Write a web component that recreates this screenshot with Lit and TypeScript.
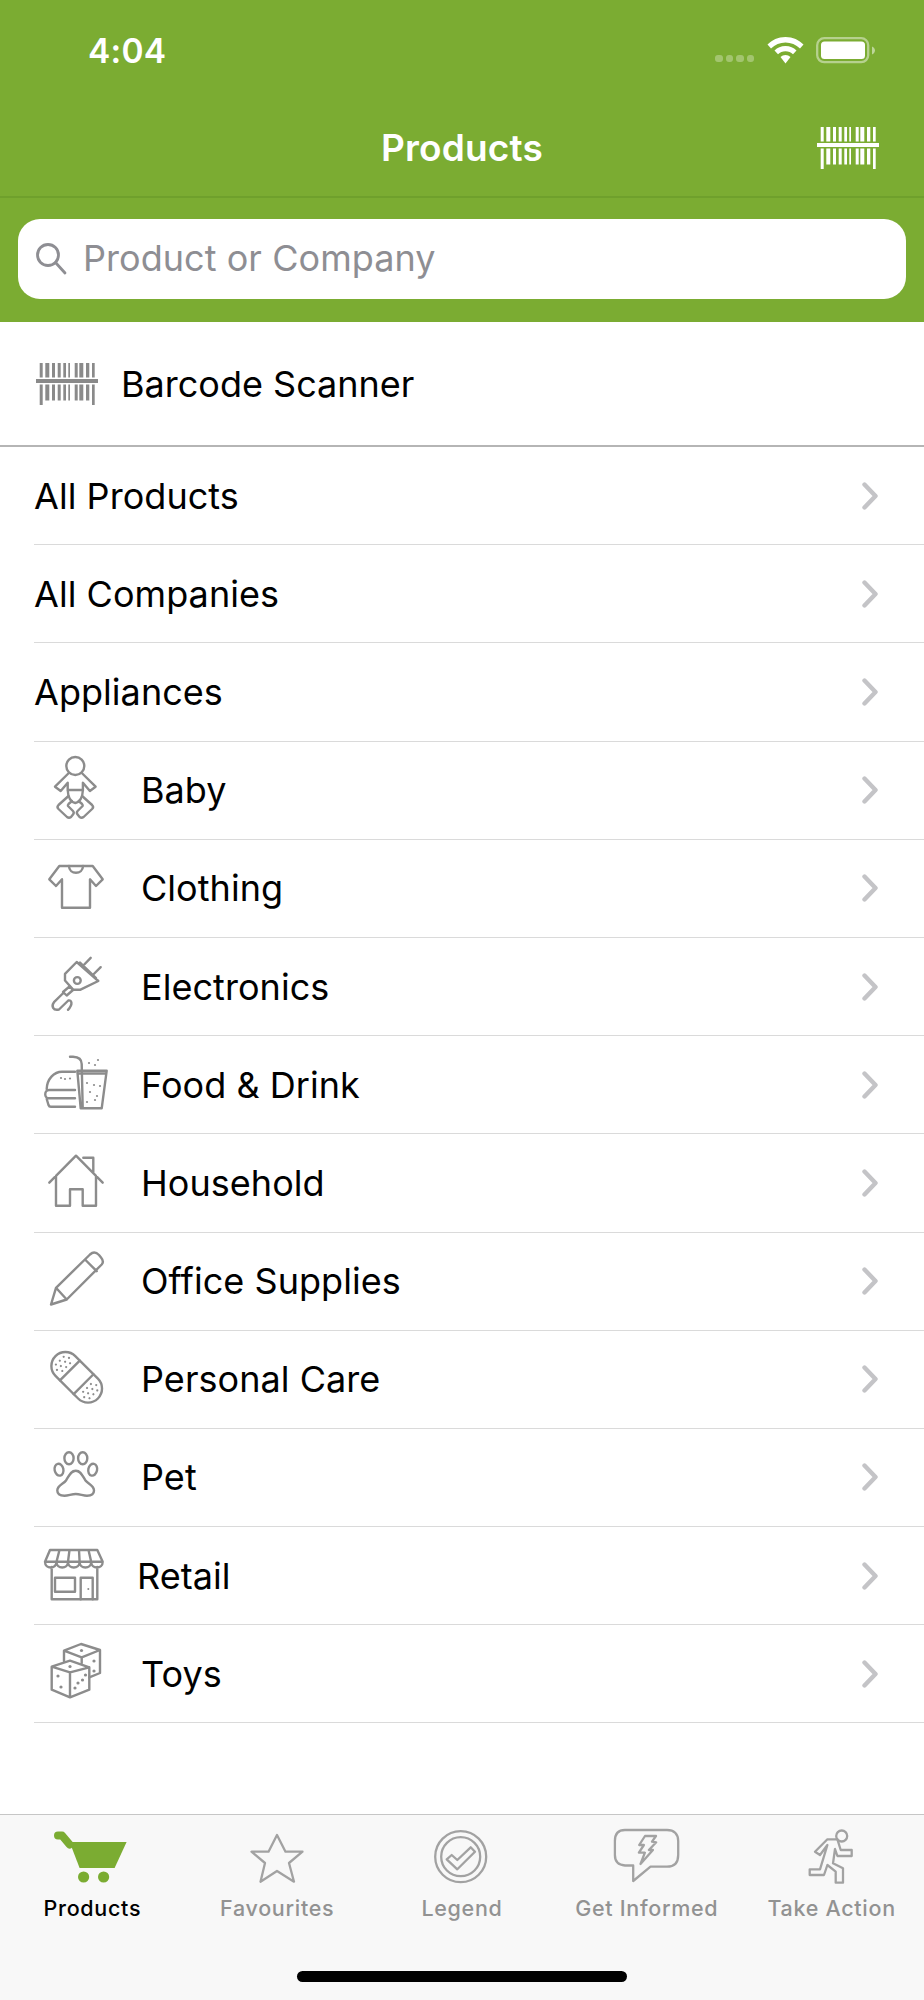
import { LitElement, html, svg, css, nothing } from "lit";
import { customElement } from "lit/decorators.js";

const BARS: [number, number][] = [[3.7,3],[9.3,4],[16,3],[21.7,3],[27.3,2.7],[32.3,1.7],[38.7,3],[43.3,4],[50,3.3],[56,2.7]];
const barcode = (cls: string) => html`<svg class=${cls} viewBox="0 0 62 42" fill="currentColor">
  ${BARS.map(([x, w], i) => {
    const tall = i === 0 || i === BARS.length - 1;
    return svg`<rect x=${x} y="0" width=${w} height="14.5"></rect><rect x=${x} y="21.5" width=${w} height=${tall ? 20.5 : 16}></rect>`;
  })}
  <rect x="0" y="16" width="62" height="4"></rect>
</svg>`;

const dots = (pts: number[][], r = 1.1) => pts.map(([x, y]) => svg`<circle cx=${x} cy=${y} r=${r}></circle>`);

const ICONS: Record<string, unknown> = {
  baby: html`<svg class="ico" viewBox="0 0 70 70">
    <circle cx="35.3" cy="11" r="9"></circle>
    <path d="M28.3 18.5L15 31.7l5.7 4.3 7-8.3V35.7M42.3 18.5L55.6 31.7l-5.7 4.3-7-8.3V35.7M27.7 35H42.9M27.7 35C28 42 31 47 35.3 48 39.6 47 42.6 42 42.9 35"></path>
    <path d="M28.5 41L18.500 50Q16.500 52 18.500 54L27 62Q29 63.500 31 62L33 59.500Q34.500 57.500 33 56L28 51Q27.500 50 28.500 49L32 46M42.100 41L52.100 50Q54.100 52 52.100 54L43.600 62Q41.600 63.500 39.600 62L37.600 59.500Q36.100 57.500 37.600 56L42.600 51Q43.100 50 42.100 49L38.600 46"></path>
  </svg>`,
  shirt: html`<svg class="ico" viewBox="0 0 70 70">
    <path d="M19.3 13H52.7L62.7 26.3 56 33 50 26.3V54.7H22V26.3L16 33 9.3 26.3Z"></path>
    <path d="M29 13C29 22 43 22 43 13"></path>
  </svg>`,
  plug: html`<svg class="ico" viewBox="0 0 70 70">
    <path d="M36.7 10L58.3 29 40 37.8H33.3L25 28.5V21.8ZM40 10.500L56 26M43.3 13.5L50.7 5.8M53.3 22.5L60.7 15.2"></path>
    <circle cx="37.3" cy="28.5" r="3.4"></circle>
    <path d="M29.5 34.5L33 38 26.7 43.5 23 40ZM23.3 41L14 50.2C11 54 13 59 19 57.5L28.3 48.5C31.5 47.5 33.5 52 28 57.8"></path>
  </svg>`,
  food: html`<svg class="ico" viewBox="0 0 70 70">
    <path d="M6.7 39C7 29 14 21.7 22 21.7H35M35 40H9C4 40 4 48.3 9 48.3H35M6.7 49L8.5 55C9 56.5 10 56.7 11 56.7H35"></path>
    <path d="M37.3 20.7H66.7L61.7 58.3H40.7ZM38 23.5H66M30 6.7H33C39 7 41.7 10 41.7 14L42.7 58"></path>
    <g class="dot">${dots([[21,28],[25,29],[30,28.5],[49,13],[55,15],[58,10],[47,33],[54,35],[60,36],[50,42],[57,46],[47,52],[55,50]])}</g>
  </svg>`,
  house: html`<svg class="ico" viewBox="0 0 70 70">
    <path d="M9.3 34.7L36 7.7 62.7 34.7M43.3 9.7H53.3V23.7M16 28V57.7H30V41.3H42.7V57.7H56V28"></path>
  </svg>`,
  pencil: html`<svg class="ico" viewBox="0 0 70 70">
    <path d="M11 58.5L16 41.8 50 8.5C53 5.8 56 6 59 9L61 11.5C63.5 14.5 63.5 16.5 61.7 18.5L26.7 53.5ZM16 41.8L26.7 53.5M45 13.5L56.7 25.2"></path>
  </svg>`,
  bandage: html`<svg class="ico" viewBox="0 0 70 70">
    <g transform="rotate(45 36.7 33.3)">
      <rect x="6.700" y="19.3" width="60" height="28" rx="14"></rect>
      <path d="M27 19.3V47.3M46.4 19.3V47.3"></path>
      <g class="dot">${dots([[13,28],[13,33.5],[13,39],[17.500,25],[17.500,30.5],[17.500,36.5],[17.500,42],[22,28],[22,33.5],[22,39],[51.5,28],[51.5,33.5],[51.5,39],[56,25],[56,30.5],[56,36.5],[56,42],[60.500,28],[60.500,33.5],[60.500,39]])}</g>
    </g>
  </svg>`,
  paw: html`<svg class="ico" viewBox="0 0 70 70">
    <ellipse cx="29" cy="16.3" rx="4.6" ry="6"></ellipse>
    <ellipse cx="42.7" cy="16.3" rx="4.6" ry="6"></ellipse>
    <ellipse cx="19" cy="27.7" rx="4.4" ry="6" transform="rotate(-12 19 27.7)"></ellipse>
    <ellipse cx="52.7" cy="27.7" rx="4.4" ry="6" transform="rotate(12 52.7 27.7)"></ellipse>
    <path d="M35.8 28.7C41 28.7 42.5 34 45.5 38.5 48 42 54 43.5 54 48.5 54 52.5 50.5 53.7 47 53.7 43 53.7 40 52 35.8 52 31.5 52 28.5 53.7 24.5 53.7 21 53.7 17.3 52.5 17.3 48.5 17.3 43.5 23.5 42 26 38.5 29 34 30.5 28.7 35.8 28.7Z"></path>
  </svg>`,
  store: html`<svg class="ico" viewBox="0 0 70 70">
    <path d="M10 9H57.3L62.7 20.7H5ZM5 20.7C5 28.5 16.5 28.5 16.5 20.7 16.5 28.5 28 28.5 28 20.7 28 28.5 39.6 28.5 39.6 20.7 39.6 28.5 51.2 28.5 51.2 20.7 51.2 28.5 62.7 28.5 62.7 20.7M19.5 9L16.5 20.7M29.5 9L28 20.7M39 9L39.6 20.7M48.5 9L51.2 20.7M11.7 26V58.3H57.3V26"></path>
    <path d="M15 36.7H35V50.7H15ZM40.7 58.3V36.7H52.7V58.3"></path>
    <g class="dot"><circle cx="48.3" cy="48" r="1"></circle></g>
  </svg>`,
  dice: html`<svg class="ico" viewBox="0 0 70 70">
    <path d="M30 21.7L49.3 28.3V50.7L30 58.3 11.7 50.7V27.7ZM11.7 27.7L30 33.3 49.3 28.3M30 33.3V58.3"></path>
    <path d="M24 22V11.7L41 5 60 11 60 34 49.3 38.3M24 11.7L41.7 18.3 60 11M41.7 18.3V24"></path>
    <g class="dot">${dots([[30,27.5],[41.5,11.5],[18,37],[21,48],[38,44],[42.5,41],[35,49],[45.5,36],[54,22],[54,32]], 1.6)}</g>
  </svg>`,
};

const CHEVRON = html`<svg class="chev" viewBox="0 0 16 28"><path d="M2.5 2.5L13.5 14 2.5 25.5"></path></svg>`;

const TABS: { label: string; icon: unknown; active?: boolean }[] = [
  { label: "Products", active: true, icon: html`<svg class="tabico" viewBox="0 0 80 64">
    <path class="cart" d="M17.6 17H74.6L62.6 43H27.6Z"></path>
    <path class="handle" d="M6 10.500H10L17.600 19.500"></path>
    <circle class="cart" cx="31.6" cy="52" r="5.600"></circle>
    <circle class="cart" cx="51.6" cy="52" r="5.600"></circle>
  </svg>` },
  { label: "Favourites", icon: html`<svg class="tabico" viewBox="0 0 80 64">
    <path d="M40 10L48.500 26.700H65.500L52 38 57 56.700 40 46 23.500 56.700 28 38 14.500 26.700H31.500Z"></path>
  </svg>` },
  { label: "Legend", icon: html`<svg class="tabico" viewBox="0 0 80 64">
    <circle cx="38.700" cy="31.700" r="25.500"></circle>
    <circle cx="38.700" cy="31.700" r="19.500"></circle>
    <path d="M24.700 34.300L29.700 30 35.300 35 48.700 22.300 53 26.700 35.300 44.300Z"></path>
  </svg>` },
  { label: "Get Informed", icon: html`<svg class="tabico" viewBox="0 0 80 64">
    <path d="M18 5H60C67 5 71.200 9 71.200 16V30C71.200 38 67 41.700 60 41.700H43.500L26.200 56V40.500H18C11 40 7.900 36 7.900 30V16C7.900 9 11 5 18 5Z"></path>
    <path d="M38 11H49L45 16.700 49.200 17.300 41.900 25H45.900L33.500 39 37.900 27.700H31.900L36.900 20H32.200Z"></path>
  </svg>` },
  { label: "Take Action", icon: html`<svg class="tabico" viewBox="0 0 80 64">
    <circle cx="49.700" cy="11" r="5.500"></circle>
    <path d="M23 26.700L35.400 14.300H45.400L48.700 25H59.700V31H45.400L43 24 41 38.300 51 43.300V57.700H43.700V46.700L35.400 40 32 50H17.700V44.300H28L35.400 20 28 30Z"></path>
  </svg>` },
];

const ROWS: { label: string; icon?: string; tight?: boolean }[] = [
  { label: "All Products" },
  { label: "All Companies" },
  { label: "Appliances" },
  { label: "Baby", icon: "baby" },
  { label: "Clothing", icon: "shirt" },
  { label: "Electronics", icon: "plug" },
  { label: "Food & Drink", icon: "food" },
  { label: "Household", icon: "house" },
  { label: "Office Supplies", icon: "pencil" },
  { label: "Personal Care", icon: "bandage" },
  { label: "Pet", icon: "paw" },
  { label: "Retail", icon: "store", tight: true },
  { label: "Toys", icon: "dice" },
];

@customElement("app-root")
export class AppRoot extends LitElement {
  static styles = css`
    :host { display: block; width: 924px; height: 2000px; background: #fff; font-family: Inter, "Liberation Sans", sans-serif; color: #000; }
    .page { display: flex; flex-direction: column; height: 2000px; }
    .head { background: #7bac32; color: #fff; height: 322px; box-sizing: border-box; }
    .status { height: 98px; display: flex; align-items: center; padding: 2px 48px 0 88px; box-sizing: border-box; }
    .time { font-size: 33.500px; font-weight: 600; flex: 1; letter-spacing: 0.200px; padding-top: 2px; }
    .signal { display: flex; gap: 3px; margin: 17px 13px 0 0; }
    .signal i { width: 7.500px; height: 7.500px; border-radius: 3px; background: rgba(255,255,255,.3); }
    .wifi { width: 37px; height: 27px; margin-right: 12px; display: block; }
    .batt { width: 60px; height: 27px; display: block; }
    .nav { height: 98px; border-bottom: 2px solid #6fa02c; box-sizing: content-box; display: grid; grid-template-columns: 1fr auto 1fr; align-items: center; }
    .title { font-size: 37px; font-weight: 600; letter-spacing: 0.150px; }
    .navbar-btn { justify-self: end; margin-right: 45px; margin-top: 1px; }
    .code-nav { width: 62px; height: 42px; display: block; color: #fff; }
    .search-wrap { padding: 21px 18px 0 18px; }
    .search { height: 80px; background: #fff; border-radius: 22px; display: flex; align-items: center; padding: 0 0 2px 17px; box-sizing: border-box; color: #8e8e93; font-size: 36px; letter-spacing: 0.050px; }
    .search svg { width: 33px; height: 33px; margin-right: 15px; fill: none; stroke: #8e8e93; stroke-width: 2.800; }
    .scan { height: 123px; display: flex; align-items: center; border-bottom: 2px solid #b5b5b5; font-size: 36px; letter-spacing: 0; padding-left: 36px; }
    .code-row { width: 62px; height: 42px; color: #8a8a8a; margin-right: 23px; display: block; }
    .list { padding-left: 34px; flex: 1; }
    .row { height: 98.200px; box-sizing: border-box; border-bottom: 1.500px solid #dadada; display: flex; align-items: center; font-size: 36px; letter-spacing: 0.050px; }
    .ico { width: 70px; height: 70px; margin: 0 31px 0 6px; fill: none; stroke: #8c8c8c; stroke-width: 2.400; stroke-linejoin: round; stroke-linecap: round; flex: none; }
    .tight .ico { margin-right: 27px; }
    .ico .dot { fill: #8c8c8c; stroke: none; }
    .label { flex: 1; }
    .chev { width: 16px; height: 28px; margin-right: 46px; fill: none; stroke: #c4c4c7; stroke-width: 4.400; stroke-linecap: round; stroke-linejoin: round; }
    .tabs { height: 186px; box-sizing: border-box; background: #f8f8f8; border-top: 1.500px solid #c6c6c6; display: grid; grid-template-columns: repeat(5, 1fr); position: relative; }
    .tab { display: flex; flex-direction: column; align-items: center; color: #929292; font-size: 21.500px; font-weight: 500; letter-spacing: 0.700px; padding-top: 10px; }
    .tab.active { color: #000; }
    .tabico { width: 80px; height: 64px; fill: none; stroke: #a2a2a2; stroke-width: 2.300; stroke-linejoin: round; display: block; margin-bottom: 6px; }
    .tabico .cart { fill: #7bac32; stroke: none; }
    .tabico .handle { fill: none; stroke: #7bac32; stroke-width: 8; stroke-linecap: round; }
    .home { position: absolute; left: 297px; top: 156px; width: 330px; height: 11px; border-radius: 6px; background: #000; }
  `;

  render() {
    return html`<div class="page">
      <div class="head">
        <div class="status">
          <span class="time">4:04</span>
          <span class="signal"><i></i><i></i><i></i><i></i></span>
          <svg class="wifi" viewBox="0 0 37 27" fill="#fff">
            <path d="M18.500 0C26 0 32 3 36.500 7.500L33 11.500C29 7.700 24 5.500 18.500 5.500 13 5.500 8 7.700 4 11.500L.5 7.500C5 3 11 0 18.500 0Z"></path>
            <path d="M18.500 9C23 9 26.500 10.700 29.500 13.500L26 17.300C24 15.500 21.500 14.300 18.500 14.300 15.500 14.300 13 15.500 11 17.300L7.500 13.500C10.500 10.700 14 9 18.500 9Z"></path>
            <path d="M18.500 18C20.500 18 22 18.700 23.500 20L18.500 26.500 13.500 20C15 18.700 16.500 18 18.500 18Z"></path>
          </svg>
          <svg class="batt" viewBox="0 0 60 27">
            <rect x="1.200" y="1.200" width="51" height="24" rx="7" fill="none" stroke="#fff" stroke-opacity=".45" stroke-width="2.300"></rect>
            <rect x="5" y="4.500" width="44" height="17.500" rx="3.500" fill="#fff"></rect>
            <path d="M56 9.500C58 10.500 59 12 59 13.500 59 15 58 16.500 56 17.500Z" fill="#fff" fill-opacity=".5"></path>
          </svg>
        </div>
        <div class="nav">
          <span></span>
          <span class="title">Products</span>
          <span class="navbar-btn">${barcode("code-nav")}</span>
        </div>
        <div class="search-wrap">
          <div class="search">
            <svg viewBox="0 0 33 33"><circle cx="13" cy="13" r="10.500"></circle><path d="M20.500 20.500L30 31" stroke-linecap="round"></path></svg>
            <span>Product or Company</span>
          </div>
        </div>
      </div>
      <div class="scan">${barcode("code-row")}<span>Barcode Scanner</span></div>
      <div class="list">
        ${ROWS.map((r) => html`<div class="row ${r.tight ? "tight" : ""}">
          ${r.icon ? ICONS[r.icon] : nothing}
          <span class="label">${r.label}</span>
          ${CHEVRON}
        </div>`)}
      </div>
      <div class="tabs">
        ${TABS.map((t) => html`<div class="tab ${t.active ? "active" : ""}">${t.icon}<span>${t.label}</span></div>`)}
        <div class="home"></div>
      </div>
    </div>`;
  }
}
